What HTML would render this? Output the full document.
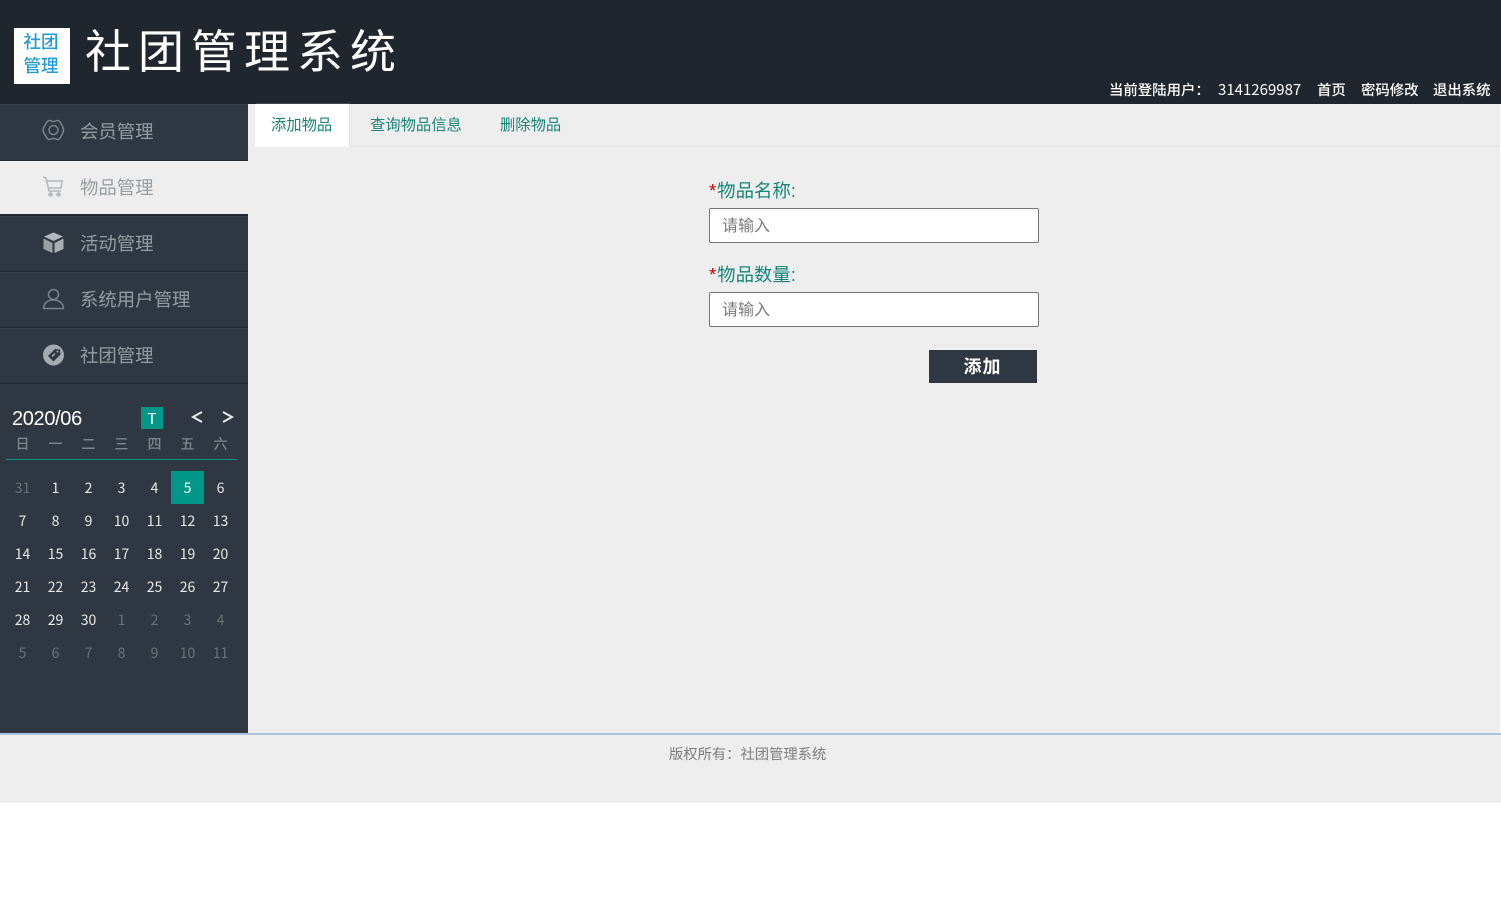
<!DOCTYPE html>
<html lang="zh-CN">
<head>
<meta charset="utf-8">
<title>社团管理系统</title>
<style>
html,body{margin:0;padding:0;background:#fff;width:1501px;height:909px;overflow:hidden}
body{font-family:"Liberation Sans","Noto Sans CJK SC",sans-serif;position:relative}
.a{position:absolute;white-space:nowrap}
.menu{position:absolute;left:0;width:248px;background:#2f3842;box-sizing:border-box;border-bottom:1px solid #1f262d;border-top:1px solid #38424c}
.menu .t{position:absolute;left:80px;top:14px;font-size:18.4px;line-height:26px;color:#949ca3}
.menu svg{position:absolute;left:42px;top:14px}
.c{position:absolute;width:33px;height:33px;line-height:35px;text-align:center;color:#e8eaeb;font-family:"Noto Sans CJK SC",sans-serif;font-size:14px}
.c.o{color:#6a7279}
.w{position:absolute;width:33px;text-align:center;font-size:14px;line-height:20px;top:434px;color:#7e868d;font-weight:500}
.in{position:absolute;left:709px;width:330px;height:35px;box-sizing:border-box;background:#fff;border:1px solid #767676;border-radius:2px;font-size:16px;line-height:36px;padding-left:12px;color:#7a7a7a}
.lb{position:absolute;left:709px;font-size:18.4px;line-height:26px;color:#15877a;white-space:nowrap}
.lb b{font-weight:normal;color:#d40000;margin-right:1px}
.h{font-size:14.4px;line-height:20px;color:#fff;top:81px;font-weight:500}
.tab{top:115px;font-size:15.3px;line-height:22px;color:#1a8578}
</style>
</head>
<body>
<div class="a" style="left:0;top:0;width:1501px;height:104px;background:#1f262e"></div>
<div class="a" style="left:14px;top:28px;width:56px;height:56px;background:#fff"></div>
<div class="a" style="left:14px;top:28px;width:54px;height:56px;color:#1f9bd8;font-size:17.5px;line-height:24px;text-align:center;white-space:normal;font-weight:500"><div style="padding-top:2px">社团<br>管理</div></div>
<div class="a" style="left:85px;top:22px;font-size:46px;line-height:60px;color:#fff;letter-spacing:7px;font-weight:400">社团管理系统</div>
<div class="a h" style="left:1109px">当前登陆用户：</div>
<div class="a" style="left:1218px;top:80px;font-size:15px;line-height:20px;color:#fff;font-family:'Noto Sans CJK SC',sans-serif">3141269987</div>
<div class="a h" style="left:1317px">首页</div>
<div class="a h" style="left:1361px">密码修改</div>
<div class="a h" style="left:1433px">退出系统</div>

<!-- sidebar -->
<div class="a" style="left:0;top:104px;width:248px;height:629px;background:#2f3842"></div>
<div class="menu" style="top:104px;height:57px"><svg width="24" height="24" viewBox="0 0 24 24" fill="none" stroke="#79828a" stroke-width="1.500" style="top:13px"><path d="M7.500 2.500c1.500 0 2 1 4 1s2.500-1 4-1c1.500 0 2.500 1 3.500 3s2.500 4 2.500 6.500-1.500 4.500-2.500 6.500-2 3-3.500 3-2-1-4-1-2.500 1-4 1-2.500-1-3.500-3-3-4-3-6.500 2-4.500 3-6.500 2-3 3.500-3z" stroke-linejoin="round"/><circle cx="11.500" cy="12" r="4.500"/></svg><div class="t">会员管理</div></div>
<div class="menu" style="top:161px;height:55px;background:#eeeeee;border-top:1px solid #f4f4f4;border-bottom:2px solid #1f262d"><svg width="24" height="24" viewBox="0 0 24 24" fill="none" stroke="#b4b8bb" stroke-width="1.500" style="top:12px"><path d="M1 3l3 1 3 13h12M5 7h15l-1 7H6.500"/><circle cx="8.500" cy="20.500" r="1.500" fill="#b4b8bb"/><circle cx="16.500" cy="20.500" r="1.500" fill="#b4b8bb"/></svg><div class="t" style="top:13px;color:#989da1">物品管理</div></div>
<div class="menu" style="top:216px;height:56px"><svg width="24" height="24" viewBox="0 0 24 24"><path d="M11.500 1.500l9.500 4-9.500 4.500L2 5.500z" fill="#b2b9be"/><path d="M1.500 7.500l9 4.500v10L1.500 18z" fill="#9aa2a8"/><path d="M21.500 7.500l-9 4.500v10l9-4z" fill="#a8afb4"/></svg><div class="t">活动管理</div></div>
<div class="menu" style="top:272px;height:56px"><svg width="24" height="24" viewBox="0 0 24 24" fill="none" stroke="#79828a" stroke-width="1.500"><circle cx="11.500" cy="7.500" r="5"/><path d="M1.500 21.500c0-5 4-8.500 10-8.500s10 3.500 10 8.500z" stroke-linejoin="round"/></svg><div class="t">系统用户管理</div></div>
<div class="menu" style="top:328px;height:56px"><svg width="24" height="24" viewBox="0 0 24 24"><circle cx="11.500" cy="12" r="10.500" fill="#a3abb0"/><path d="M6 13l7-7 5 .5.500 5-7 7z" fill="#2f3842"/><path d="M10 13.500l3-3" stroke="#a3abb0" stroke-width="1.500"/><circle cx="15.500" cy="8.500" r="1" fill="#a3abb0"/></svg><div class="t">社团管理</div></div>

<!-- calendar -->
<div class="a" style="left:12px;top:406px;font-size:20px;line-height:26px;color:#fff;letter-spacing:-.35px">2020/06</div>
<div class="a" style="left:141px;top:407px;width:22px;height:22px;background:#009688;color:#fff;font-size:15px;line-height:24px;text-align:center;font-family:'Noto Sans CJK SC',sans-serif">T</div>
<svg class="a" style="left:190px;top:409px" width="46" height="16" fill="none" stroke="#e8eaeb" stroke-width="2"><path d="M12 3L3 8l9 5M33 3l9 5-9 5"/></svg>
<div class="w" style="left:6px">日</div><div class="w" style="left:39px">一</div><div class="w" style="left:72px">二</div><div class="w" style="left:105px">三</div><div class="w" style="left:138px">四</div><div class="w" style="left:171px">五</div><div class="w" style="left:204px">六</div>
<div class="a" style="left:6px;top:459px;width:231px;height:1px;background:#009688"></div>
<div class="a" style="left:171px;top:471px;width:33px;height:33px;background:#009688"></div>

<div class="c o" style="left:6px;top:471px">31</div><div class="c" style="left:39px;top:471px">1</div><div class="c" style="left:72px;top:471px">2</div><div class="c" style="left:105px;top:471px">3</div><div class="c" style="left:138px;top:471px">4</div><div class="c" style="left:171px;top:471px;color:#fff">5</div><div class="c" style="left:204px;top:471px">6</div>
<div class="c" style="left:6px;top:504px">7</div><div class="c" style="left:39px;top:504px">8</div><div class="c" style="left:72px;top:504px">9</div><div class="c" style="left:105px;top:504px">10</div><div class="c" style="left:138px;top:504px">11</div><div class="c" style="left:171px;top:504px">12</div><div class="c" style="left:204px;top:504px">13</div>
<div class="c" style="left:6px;top:537px">14</div><div class="c" style="left:39px;top:537px">15</div><div class="c" style="left:72px;top:537px">16</div><div class="c" style="left:105px;top:537px">17</div><div class="c" style="left:138px;top:537px">18</div><div class="c" style="left:171px;top:537px">19</div><div class="c" style="left:204px;top:537px">20</div>
<div class="c" style="left:6px;top:570px">21</div><div class="c" style="left:39px;top:570px">22</div><div class="c" style="left:72px;top:570px">23</div><div class="c" style="left:105px;top:570px">24</div><div class="c" style="left:138px;top:570px">25</div><div class="c" style="left:171px;top:570px">26</div><div class="c" style="left:204px;top:570px">27</div>
<div class="c" style="left:6px;top:603px">28</div><div class="c" style="left:39px;top:603px">29</div><div class="c" style="left:72px;top:603px">30</div><div class="c o" style="left:105px;top:603px">1</div><div class="c o" style="left:138px;top:603px">2</div><div class="c o" style="left:171px;top:603px">3</div><div class="c o" style="left:204px;top:603px">4</div>
<div class="c o" style="left:6px;top:636px">5</div><div class="c o" style="left:39px;top:636px">6</div><div class="c o" style="left:72px;top:636px">7</div><div class="c o" style="left:105px;top:636px">8</div><div class="c o" style="left:138px;top:636px">9</div><div class="c o" style="left:171px;top:636px">10</div><div class="c o" style="left:204px;top:636px">11</div>

<!-- main -->
<div class="a" style="left:248px;top:104px;width:1252px;height:629px;background:#eeeeee"></div>
<div class="a" style="left:255px;top:146px;width:1245px;height:1px;background:#e0e0e0"></div>
<div class="a" style="left:255px;top:104px;width:94px;height:43px;background:#fff;box-shadow:1px 0 1px #e4e4e4"></div>
<div class="a tab" style="left:271px">添加物品</div>
<div class="a tab" style="left:370px">查询物品信息</div>
<div class="a tab" style="left:500px">删除物品</div>

<div class="lb" style="top:178px"><b>*</b>物品名称:</div>
<div class="in" style="top:208px">请输入</div>
<div class="lb" style="top:262px"><b>*</b>物品数量:</div>
<div class="in" style="top:292px">请输入</div>
<div class="a" style="left:929px;top:350px;width:108px;height:33px;background:#2f3742;color:#fff;font-size:18px;font-weight:bold;line-height:34px;text-align:center;letter-spacing:1px;text-indent:-1px">添加</div>

<!-- footer -->
<div class="a" style="left:248px;top:733px;width:1253px;height:1px;background:#fff"></div>
<div class="a" style="left:0;top:733px;width:1501px;height:2px;background:#a9c4dc"></div>
<div class="a" style="left:0;top:735px;width:1501px;height:68px;background:#eeeeee"></div>
<div class="a" style="left:669px;top:745px;font-size:14.3px;line-height:20px;color:#7d7d7d">版权所有：社团管理系统</div>
</body>
</html>
